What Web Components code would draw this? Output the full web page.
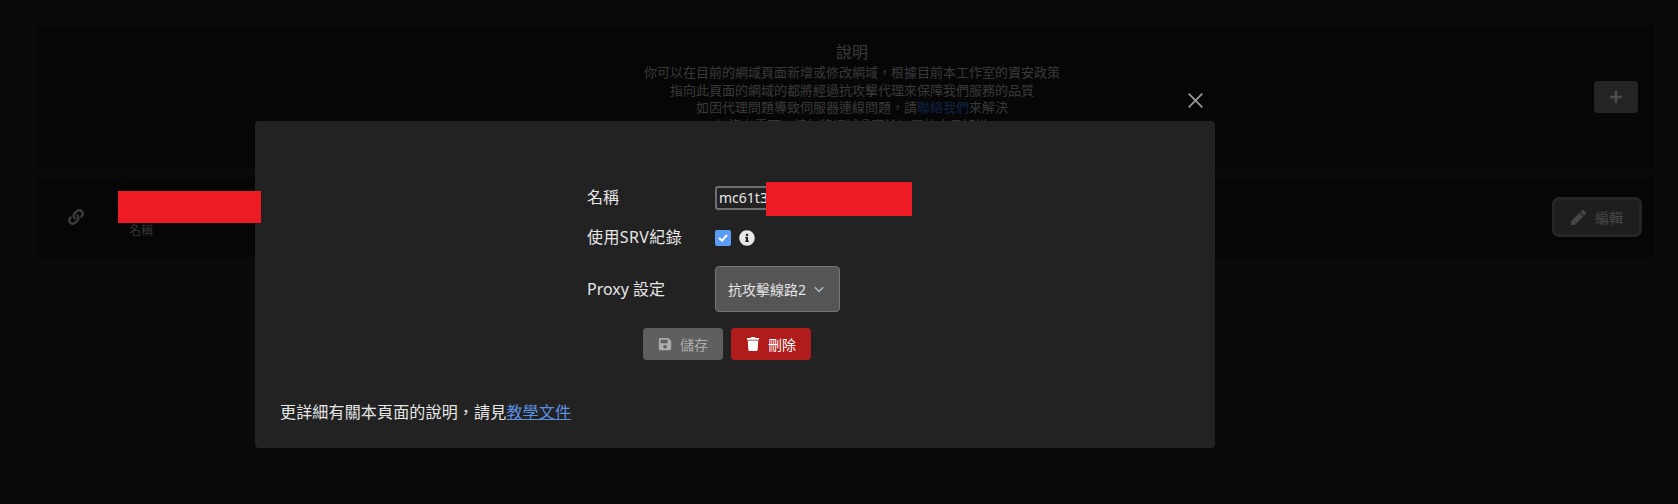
<!DOCTYPE html>
<html lang="zh-Hant">
<head>
<meta charset="utf-8">
<title>網域</title>
<style>
  html, body { margin: 0; height: 100%; background: #222; overflow: hidden; }
  body { font-family: "Noto Sans", "Noto Sans CJK TC", sans-serif; position: relative; }
</style>
</head>
<body>
<domain-page>
  <info-card></info-card>
  <domain-row></domain-row>
</domain-page>

<modal-overlay>
  <domain-form></domain-form>
  <span slot="footer">更詳細有關本頁面的說明，請見<a href="#">教學文件</a></span>
</modal-overlay>

<!-- the two blocks that hide the domain in the screenshot -->
<redact-mask style="left:118px;top:191px;width:143px;height:32px"></redact-mask>
<redact-mask style="left:766px;top:182px;width:146px;height:34px"></redact-mask>

<script>
// FontAwesome 5 solid shapes, drawn inline
const ICONS = {
  save: ['0 0 448 512', 'M433.941 129.941l-83.882-83.882A48 48 0 0 0 316.118 32H48C21.49 32 0 53.49 0 80v352c0 26.51 21.49 48 48 48h352c26.51 0 48-21.49 48-48V163.882a48 48 0 0 0-14.059-33.941zM224 416c-35.346 0-64-28.654-64-64 0-35.346 28.654-64 64-64s64 28.654 64 64c0 35.346-28.654 64-64 64zm96-304.52V212c0 6.627-5.373 12-12 12H76c-6.627 0-12-5.373-12-12V108c0-6.627 5.373-12 12-12h228.52c3.183 0 6.235 1.264 8.485 3.515l3.48 3.48A11.996 11.996 0 0 1 320 111.48z'],
  trash: ['0 0 448 512', 'M432 32H312l-9.4-18.7A24 24 0 0 0 281.1 0H166.8a23.72 23.72 0 0 0-21.4 13.3L136 32H16A16 16 0 0 0 0 48v32a16 16 0 0 0 16 16h416a16 16 0 0 0 16-16V48a16 16 0 0 0-16-16zM53.2 467a48 48 0 0 0 47.9 45h245.8a48 48 0 0 0 47.9-45L416 128H32z'],
  pen: ['0 0 512 512', 'M290.74 93.24l128.02 128.02-277.99 277.99-114.14 12.6C11.35 513.54-1.56 500.62.14 485.34l12.7-114.22 277.9-277.88zm207.2-19.06l-60.11-60.11c-18.75-18.75-49.16-18.75-67.91 0l-56.55 56.55 128.02 128.02 56.55-56.55c18.75-18.76 18.75-49.16 0-67.91z'],
  plus: ['0 0 448 512', 'M416 208H272V64c0-17.67-14.33-32-32-32h-32c-17.67 0-32 14.33-32 32v144H32c-17.67 0-32 14.33-32 32v32c0 17.67 14.33 32 32 32h144v144c0 17.67 14.33 32 32 32h32c17.67 0 32-14.33 32-32V304h144c17.67 0 32-14.33 32-32v-32c0-17.67-14.33-32-32-32z'],
  link: ['0 0 512 512', 'M326.612 185.391c59.747 59.809 58.927 155.698.36 214.59-.11.12-.24.25-.36.37l-67.2 67.2c-59.27 59.27-155.699 59.262-214.96 0-59.27-59.26-59.27-155.7 0-214.96l37.106-37.106c9.84-9.84 26.786-3.3 27.294 10.606.648 17.722 3.826 35.527 9.69 52.721 1.986 5.822.567 12.262-3.783 16.612l-13.087 13.087c-28.026 28.026-28.905 73.66-1.155 101.96 28.024 28.579 74.086 28.749 102.325.51l67.2-67.19c28.191-28.191 28.073-73.757 0-101.83-3.701-3.694-7.429-6.564-10.341-8.569a16.037 16.037 0 0 1-6.947-12.606c-.396-10.567 3.348-21.456 11.698-29.806l21.054-21.055c5.521-5.521 14.182-6.199 20.584-1.731a152.482 152.482 0 0 1 20.522 17.197zM467.547 44.449c-59.261-59.262-155.69-59.27-214.96 0l-67.2 67.2c-.12.12-.25.25-.36.37-58.566 58.892-59.387 154.781.36 214.59a152.454 152.454 0 0 0 20.521 17.196c6.402 4.468 15.064 3.789 20.584-1.731l21.054-21.055c8.35-8.35 12.094-19.239 11.698-29.806a16.037 16.037 0 0 0-6.947-12.606c-2.912-2.005-6.64-4.875-10.341-8.569-28.073-28.073-28.191-73.639 0-101.83l67.2-67.19c28.239-28.239 74.3-28.069 102.325.51 27.75 28.3 26.872 73.934-1.155 101.96l-13.087 13.087c-4.35 4.35-5.769 10.79-3.783 16.612 5.864 17.194 9.042 34.999 9.69 52.721.509 13.906 17.454 20.446 27.294 10.606l37.106-37.106c59.271-59.259 59.271-155.699.001-214.959z'],
  info: ['0 0 512 512', 'M256 8C119.043 8 8 119.083 8 256c0 136.997 111.043 248 248 248s248-111.003 248-248C504 119.083 392.957 8 256 8zm0 110c23.196 0 42 18.804 42 42s-18.804 42-42 42-42-18.804-42-42 18.804-42 42-42zm56 254c0 6.627-5.373 12-12 12h-88c-6.627 0-12-5.373-12-12v-24c0-6.627 5.373-12 12-12h12v-64h-12c-6.627 0-12-5.373-12-12v-24c0-6.627 5.373-12 12-12h64c6.627 0 12 5.373 12 12v100h12c6.627 0 12 5.373 12 12v24z'],
};
const icon = (name, size) => {
  const [box, d] = ICONS[name];
  return `<svg viewBox="${box}" width="${size}" height="${size}" fill="currentColor" aria-hidden="true"><path d="${d}"/></svg>`;
};

class DomainPage extends HTMLElement {
  connectedCallback() {
    this.attachShadow({ mode: 'open' }).innerHTML = `
      <style>
        :host { display: flex; flex-direction: column; gap: 9px; padding: 25px 24px 0 36px; color: #fff; }
      </style>
      <slot></slot>`;
  }
}

class InfoCard extends HTMLElement {
  connectedCallback() {
    this.attachShadow({ mode: 'open' }).innerHTML = `
      <style>
        :host { display: flex; align-items: flex-start; height: 143px; box-sizing: border-box; background: #141414; border-radius: 4px; }
        .text { flex: 1; margin-left: 74px; padding-top: 17px; text-align: center; font-size: 13px; line-height: 17.5px; color: #bdbdbd; }
        h2 { margin: 0 0 1px; font-size: 16px; line-height: 21px; font-weight: 400; }
        a { color: #3273dc; text-decoration: none; }
        button { all: unset; box-sizing: border-box; display: flex; align-items: center; justify-content: center; width: 44px; height: 32px; margin: 56px 16px 0 0; background: #787878; border-radius: 4px; color: #fff; }
      </style>
      <div class="text">
        <h2>說明</h2>
        你可以在目前的網域頁面新增或修改網域，根據目前本工作室的資安政策<br>
        指向此頁面的網域的都將經過抗攻擊代理來保障我們服務的品質<br>
        如因代理問題導致伺服器連線問題，請<a href="#">聯絡我們</a>來解決<br>
        如沒有需要，請勿將網域分享給無關的人員知道
      </div>
      <button aria-label="新增">${icon('plus', 14)}</button>`;
  }
}

class DomainRow extends HTMLElement {
  connectedCallback() {
    this.attachShadow({ mode: 'open' }).innerHTML = `
      <style>
        :host { display: flex; align-items: flex-start; height: 80px; background: #141414; border-radius: 4px; }
        .link { margin: 32px 0 0 32px; color: #c4c4c4; display: flex; }
        .name { margin: 45px 0 0 45px; flex: 1; font-size: 12px; line-height: 18px; color: #b4b4b4; }
        button { all: unset; box-sizing: border-box; display: flex; align-items: center; justify-content: center; gap: 9px; width: 84px; height: 34px; margin: 23px 15px 0 0; background: #646464; border-radius: 4px; font-size: 14px; color: #e8e8e8; box-shadow: 0 0 0 3px #7c7c7c; }
      </style>
      <span class="link">${icon('link', 16)}</span>
      <div class="name">名稱</div>
      <button>${icon('pen', 15)}編輯</button>`;
  }
}

class ModalOverlay extends HTMLElement {
  connectedCallback() {
    this.attachShadow({ mode: 'open' }).innerHTML = `
      <style>
        :host { position: absolute; inset: 0; display: block; background: rgba(0,0,0,.7); padding: 121px 0 0 255px; box-sizing: border-box; }
        .card { width: 960px; height: 327px; box-sizing: border-box; display: flex; flex-direction: column; padding: 65px 25px 0; background: #222; border-radius: 4px; color: #e6e6e6; font-size: 16px; }
        footer { margin-top: 40px; line-height: 24px; letter-spacing: .17px; }
        ::slotted(span) { display: block; }
        .close { position: absolute; left: 1188px; top: 93px; width: 15px; height: 15px; }
      </style>
      <svg class="close" viewBox="0 0 15 15" aria-label="關閉"><path d="M.7.7l13.6 13.6M14.3.7L.7 14.3" stroke="#9a9a9a" stroke-width="1.7" fill="none"/></svg>
      <div class="card">
        <slot></slot>
        <footer><slot name="footer"></slot></footer>
      </div>`;
    this.querySelector('[slot=footer] a').style.cssText = 'color:#5c8fe0';
  }
}

class DomainForm extends HTMLElement {
  connectedCallback() {
    this.attachShadow({ mode: 'open' }).innerHTML = `
      <style>
        :host { display: grid; grid-template-columns: 128px auto; grid-template-rows: 24px 24px 46px 32px; row-gap: 16px; align-items: center; justify-content: start; margin-left: 307px; }
        label { line-height: 24px; white-space: nowrap; }
        .up { padding-bottom: 2px; }
        .wide { letter-spacing: .4px; }
        .input { box-sizing: border-box; width: 190px; height: 24px; padding: 0 2px; border: 2px solid #6f6f6f; border-radius: 3px; font-size: 14px; line-height: 19px; color: #e8e8e8; overflow: hidden; }
        .srv { display: flex; align-items: center; gap: 8px; }
        .check { width: 16px; height: 16px; border-radius: 2px; background: #5b9df5; display: flex; align-items: center; justify-content: center; }
        .info { display: flex; color: #e8e8e8; }
        .select { box-sizing: border-box; width: 125px; height: 46px; display: flex; align-items: center; gap: 8px; padding-left: 12px; background: #555; border: 1px solid #747474; border-radius: 4px; font-size: 14px; color: #e4e4e4; white-space: nowrap; }
        .actions { grid-column: 1 / -1; display: flex; gap: 8px; margin-left: 56px; }
        .btn { box-sizing: border-box; width: 80px; height: 32px; display: flex; align-items: center; justify-content: center; gap: 8px; border-radius: 4px; font-size: 14px; }
        .save { background: #5f5f5f; color: #adadad; }
        .delete { background: #b01b1b; color: #fff; }
      </style>
      <label class="up">名稱</label>
      <div class="input">mc61t3</div>
      <label class="up wide">使用SRV紀錄</label>
      <div class="srv">
        <span class="check"><svg width="10" height="8" viewBox="0 0 10 8"><path d="M1 4l3 2.6L9 1" stroke="#fff" stroke-width="2" fill="none"/></svg></span>
        <span class="info">${icon('info', 16)}</span>
      </div>
      <label>Proxy 設定</label>
      <div class="select">抗攻擊線路2<svg width="10" height="7" viewBox="0 0 10 7"><path d="M.8 1.2l4.2 4.2 4.2-4.2" stroke="#b4bcc6" stroke-width="1.4" fill="none"/></svg></div>
      <div class="actions">
        <div class="btn save">${icon('save', 14)}儲存</div>
        <div class="btn delete">${icon('trash', 14)}刪除</div>
      </div>`;
  }
}

class RedactMask extends HTMLElement {
  connectedCallback() {
    this.attachShadow({ mode: 'open' }).innerHTML = `
      <style>:host { position: absolute; display: block; background: #ed1c24; }</style>`;
  }
}

customElements.define('domain-page', DomainPage);
customElements.define('info-card', InfoCard);
customElements.define('domain-row', DomainRow);
customElements.define('modal-overlay', ModalOverlay);
customElements.define('domain-form', DomainForm);
customElements.define('redact-mask', RedactMask);
</script>
</body>
</html>
